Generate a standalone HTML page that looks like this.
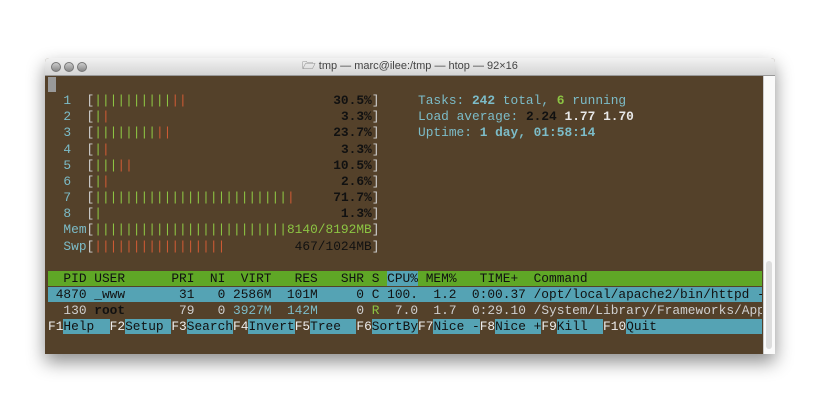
<!DOCTYPE html>
<html><head><style>
html,body{margin:0;padding:0;background:#fff;width:820px;height:413px;overflow:hidden}
.win{position:absolute;left:45px;top:58px;width:730px;height:296px;background:#54412a;box-shadow:0 8px 18px rgba(0,0,0,.45);border-radius:4px 4px 0 0;overflow:hidden}
.tb{position:absolute;left:0;top:0;width:730px;height:17px;background:linear-gradient(#f2f2f2,#d4d4d4);border-bottom:1px solid #999;font:11px "Liberation Sans",sans-serif;color:#444;text-align:center;line-height:17px}
.dot{position:absolute;top:4px;width:8px;height:8px;border-radius:50%;background:linear-gradient(#ccc,#888);border:1px solid #777}
.sb{position:absolute;right:0;top:18px;width:11px;height:278px;background:#fafafa;border-left:1px solid #ccc}
.sb div{position:absolute;left:2px;top:185px;width:6px;height:88px;border-radius:3px;background:#ddd}
pre{position:absolute;left:48px;top:77px;width:714px;overflow:hidden;margin:0;font:12.85px/16.15px "Liberation Mono",monospace;color:#cfcfcf}
.c{color:#7cbcc8}.g{color:#8cc443}.r{color:#cd5a34}.k{color:#111;font-weight:bold}.w{color:#e8e8e8;font-weight:bold}.cb{color:#7cbcc8;font-weight:bold}.gb{color:#8cc443;font-weight:bold}
.hd{background:#5fa726;color:#111}.sel{background:#55a3b4;color:#111}.cpu{background:#55a3b4}
.fk{color:#eee}.fl{background:#55a3b4;color:#111}
.cur{background:#999}
</style></head><body>
<div class="win">
<div class="tb"><span class="dot" style="left:6px"></span><span class="dot" style="left:19px"></span><span class="dot" style="left:32px"></span>&#128449; tmp — marc@ilee:/tmp — htop — 92×16</div>
<div class="sb"><div></div></div>
</div>
<pre><span class="cur"> </span>
  <span class="c">1</span>  [<span class="g">||||||||||</span><span class="r">||</span>                   <span class="k">30.5%</span>]     <span class="c">Tasks: </span><span class="cb">242</span><span class="c"> total, </span><span class="gb">6</span><span class="c"> running</span>
  <span class="c">2</span>  [<span class="g">|</span><span class="r">|</span>                              <span class="k">3.3%</span>]     <span class="c">Load average: </span><span class="k">2.24</span> <span class="w">1.77</span> <span class="w">1.70</span>
  <span class="c">3</span>  [<span class="g">||||||||</span><span class="r">||</span>                     <span class="k">23.7%</span>]     <span class="c">Uptime: </span><span class="cb">1 day, 01:58:14</span>
  <span class="c">4</span>  [<span class="g">|</span><span class="r">|</span>                              <span class="k">3.3%</span>]
  <span class="c">5</span>  [<span class="g">|||</span><span class="r">||</span>                          <span class="k">10.5%</span>]
  <span class="c">6</span>  [<span class="g">|</span><span class="r">|</span>                              <span class="k">2.6%</span>]
  <span class="c">7</span>  [<span class="g">|||||||||||||||||||||||||</span><span class="r">|</span>     <span class="k">71.7%</span>]
  <span class="c">8</span>  [<span class="g">|</span>                               <span class="k">1.3%</span>]
  <span class="c">Mem</span>[<span class="g">|||||||||||||||||||||||||8140/8192MB</span>]
  <span class="c">Swp</span>[<span class="r">|||||||||||||||||</span>         <span style="color:#111">467/1024MB</span>]

<span class="hd">  PID USER      PRI  NI  VIRT   RES   SHR S <span class="cpu">CPU%</span> MEM%   TIME+  Command                                         </span>
<span class="sel"> 4870 _www       31   0 2586M  101M     0 C 100.  1.2  0:00.37 /opt/local/apache2/bin/httpd -       </span>
  130 <span class="k">root</span>       79   0 <span class="c">3927M</span>  <span class="c">142M</span>     0 <span class="g">R</span>  7.0  1.7  0:29.10 /System/Library/Frameworks/App
<span class="fk">F1</span><span class="fl">Help  </span><span class="fk">F2</span><span class="fl">Setup </span><span class="fk">F3</span><span class="fl">Search</span><span class="fk">F4</span><span class="fl">Invert</span><span class="fk">F5</span><span class="fl">Tree  </span><span class="fk">F6</span><span class="fl">SortBy</span><span class="fk">F7</span><span class="fl">Nice -</span><span class="fk">F8</span><span class="fl">Nice +</span><span class="fk">F9</span><span class="fl">Kill  </span><span class="fk">F10</span><span class="fl">Quit                                   </span></pre>
</body></html>
